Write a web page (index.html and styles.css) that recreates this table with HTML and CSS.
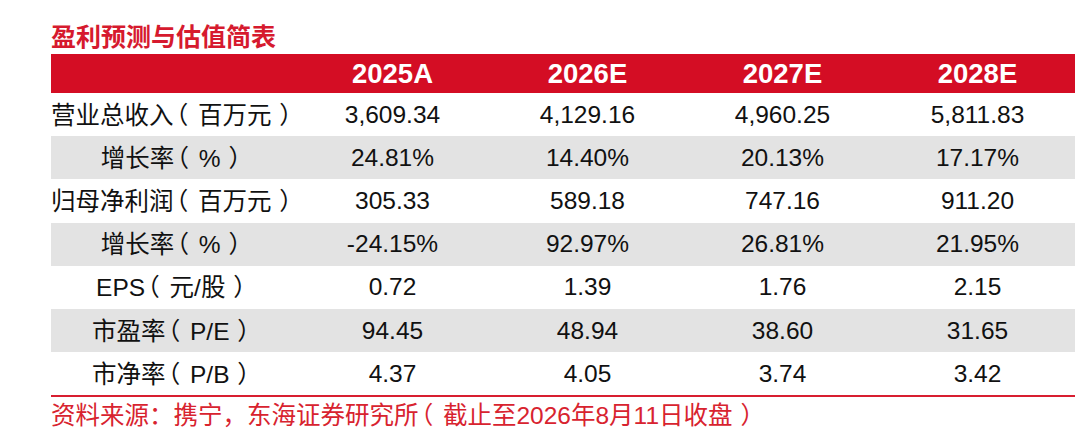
FILE: index.html
```html
<!DOCTYPE html>
<html lang="zh-CN">
<head>
<meta charset="utf-8">
<title>盈利预测与估值简表</title>
<link rel="stylesheet" href="styles.css">
</head>
<body>
<div class="page">
  <div class="title">盈利预测与估值简表</div>
  <div class="table">
    <div class="row head">
      <div class="cell label"></div>
      <div class="cell">2025A</div>
      <div class="cell">2026E</div>
      <div class="cell">2027E</div>
      <div class="cell">2028E</div>
    </div>
    <div class="row">
      <div class="cell label">营业总收入<span class="lp">（</span>百万元<span class="rp">）</span></div>
      <div class="cell">3,609.34</div>
      <div class="cell">4,129.16</div>
      <div class="cell">4,960.25</div>
      <div class="cell">5,811.83</div>
    </div>
    <div class="row grey">
      <div class="cell label">增长率<span class="lp">（</span>%<span class="rp">）</span></div>
      <div class="cell">24.81%</div>
      <div class="cell">14.40%</div>
      <div class="cell">20.13%</div>
      <div class="cell">17.17%</div>
    </div>
    <div class="row">
      <div class="cell label">归母净利润<span class="lp">（</span>百万元<span class="rp">）</span></div>
      <div class="cell">305.33</div>
      <div class="cell">589.18</div>
      <div class="cell">747.16</div>
      <div class="cell">911.20</div>
    </div>
    <div class="row grey">
      <div class="cell label">增长率<span class="lp">（</span>%<span class="rp">）</span></div>
      <div class="cell">-24.15%</div>
      <div class="cell">92.97%</div>
      <div class="cell">26.81%</div>
      <div class="cell">21.95%</div>
    </div>
    <div class="row">
      <div class="cell label">EPS<span class="lp">（</span>元/股<span class="rp">）</span></div>
      <div class="cell">0.72</div>
      <div class="cell">1.39</div>
      <div class="cell">1.76</div>
      <div class="cell">2.15</div>
    </div>
    <div class="row grey">
      <div class="cell label">市盈率<span class="lp">（</span>P/E<span class="rp">）</span></div>
      <div class="cell">94.45</div>
      <div class="cell">48.94</div>
      <div class="cell">38.60</div>
      <div class="cell">31.65</div>
    </div>
    <div class="row last">
      <div class="cell label">市净率<span class="lp">（</span>P/B<span class="rp">）</span></div>
      <div class="cell">4.37</div>
      <div class="cell">4.05</div>
      <div class="cell">3.74</div>
      <div class="cell">3.42</div>
    </div>
  </div>
  <div class="source">资料来源：携宁，东海证券研究所<span class="lp">（</span>截止至2026年8月11日收盘<span class="rp">）</span></div>
</div>
</body>
</html>
```

FILE: styles.css
```css
html, body {
  margin: 0;
  padding: 0;
  background: #ffffff;
}

body {
  font-family: "Liberation Sans", "Noto Sans CJK SC", sans-serif;
  color: #111111;
}

.page {
  width: 1024px;
  padding: 20px 0 0 51px;
}

.title {
  height: 30px;
  line-height: 30px;
  font-size: 25px;
  font-weight: bold;
  color: #d61a2e;
  font-family: "Noto Sans CJK SC", sans-serif;
  margin-bottom: 4px;
}

.table {
  display: flex;
  flex-direction: column;
  border-bottom: 2px solid #d81e30;
}

.row {
  display: grid;
  grid-template-columns: 244px repeat(4, 195px);
  height: 43.2px;
  align-items: center;
  font-size: 24.5px;
}

.row.grey {
  background: #e3e3e3;
}

.row.head {
  height: 39px;
  background: #d40d24;
  color: #ffffff;
  font-size: 27.5px;
  font-weight: bold;
}

.cell {
  text-align: center;
  white-space: nowrap;
  line-height: 30px;
}

.lp,
.rp {
  display: inline-block;
  font-family: "Noto Sans CJK SC", sans-serif;
  font-feature-settings: "halt" 1;
}

.lp {
  padding-left: 0.1em;
  padding-right: 0.4em;
}

.rp {
  padding-left: 0.32em;
  padding-right: 0.18em;
}

.source {
  margin-top: 2px;
  height: 30px;
  line-height: 30px;
  font-size: 24.5px;
  color: #d8232f;
}
```
